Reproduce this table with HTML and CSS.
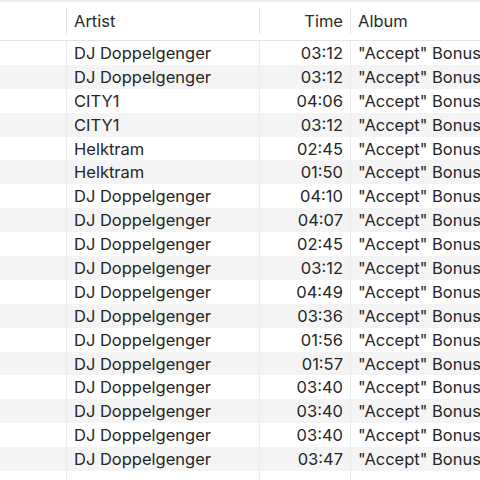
FILE: index.html
```html
<!DOCTYPE html>
<html>
<head>
<meta charset="utf-8">
<link rel="stylesheet" href="styles.css">
</head>
<body>
<div class="table">
  <div class="head">
    <div class="hcell c1"></div>
    <div class="hcell c2"><span class="sep"></span>Artist</div>
    <div class="hcell c3"><span class="sep"></span>Time</div>
    <div class="hcell c4"><span class="sep"></span>Album</div>
  </div>
  <div class="body">
    <div class="row"><div class="cell c1"></div><div class="cell c2">DJ Doppelgenger</div><div class="cell c3">03:12</div><div class="cell c4">"Accept" Bonus</div></div>
    <div class="row"><div class="cell c1"></div><div class="cell c2">DJ Doppelgenger</div><div class="cell c3">03:12</div><div class="cell c4">"Accept" Bonus</div></div>
    <div class="row"><div class="cell c1"></div><div class="cell c2">CITY1</div><div class="cell c3">04:06</div><div class="cell c4">"Accept" Bonus</div></div>
    <div class="row"><div class="cell c1"></div><div class="cell c2">CITY1</div><div class="cell c3">03:12</div><div class="cell c4">"Accept" Bonus</div></div>
    <div class="row"><div class="cell c1"></div><div class="cell c2">Helktram</div><div class="cell c3">02:45</div><div class="cell c4">"Accept" Bonus</div></div>
    <div class="row"><div class="cell c1"></div><div class="cell c2">Helktram</div><div class="cell c3">01:50</div><div class="cell c4">"Accept" Bonus</div></div>
    <div class="row"><div class="cell c1"></div><div class="cell c2">DJ Doppelgenger</div><div class="cell c3">04:10</div><div class="cell c4">"Accept" Bonus</div></div>
    <div class="row"><div class="cell c1"></div><div class="cell c2">DJ Doppelgenger</div><div class="cell c3">04:07</div><div class="cell c4">"Accept" Bonus</div></div>
    <div class="row"><div class="cell c1"></div><div class="cell c2">DJ Doppelgenger</div><div class="cell c3">02:45</div><div class="cell c4">"Accept" Bonus</div></div>
    <div class="row"><div class="cell c1"></div><div class="cell c2">DJ Doppelgenger</div><div class="cell c3">03:12</div><div class="cell c4">"Accept" Bonus</div></div>
    <div class="row"><div class="cell c1"></div><div class="cell c2">DJ Doppelgenger</div><div class="cell c3">04:49</div><div class="cell c4">"Accept" Bonus</div></div>
    <div class="row"><div class="cell c1"></div><div class="cell c2">DJ Doppelgenger</div><div class="cell c3">03:36</div><div class="cell c4">"Accept" Bonus</div></div>
    <div class="row"><div class="cell c1"></div><div class="cell c2">DJ Doppelgenger</div><div class="cell c3">01:56</div><div class="cell c4">"Accept" Bonus</div></div>
    <div class="row"><div class="cell c1"></div><div class="cell c2">DJ Doppelgenger</div><div class="cell c3">01:57</div><div class="cell c4">"Accept" Bonus</div></div>
    <div class="row"><div class="cell c1"></div><div class="cell c2">DJ Doppelgenger</div><div class="cell c3">03:40</div><div class="cell c4">"Accept" Bonus</div></div>
    <div class="row"><div class="cell c1"></div><div class="cell c2">DJ Doppelgenger</div><div class="cell c3">03:40</div><div class="cell c4">"Accept" Bonus</div></div>
    <div class="row"><div class="cell c1"></div><div class="cell c2">DJ Doppelgenger</div><div class="cell c3">03:40</div><div class="cell c4">"Accept" Bonus</div></div>
    <div class="row"><div class="cell c1"></div><div class="cell c2">DJ Doppelgenger</div><div class="cell c3">03:47</div><div class="cell c4">"Accept" Bonus</div></div>
    <div class="row"><div class="cell c1"></div><div class="cell c2"></div><div class="cell c3"></div><div class="cell c4"></div></div>
  </div>
</div>
</body>
</html>
```
FILE: styles.css
```css
html, body {
  margin: 0;
  padding: 0;
  background: #ffffff;
  overflow: hidden;
}
body {
  width: 480px;
  height: 480px;
  font-family: Inter, "Liberation Sans", sans-serif;
  font-size: 16.5px;
  color: #262626;
}
.table {
  width: 480px;
  overflow: hidden;
}
.head {
  display: grid;
  grid-template-columns: 66px 193px 91px 200px;
  height: 38px;
  border-top: 2px solid #ececec;
  border-bottom: 1px solid #e4e4e4;
  background: #ffffff;
}
.hcell {
  position: relative;
  display: flex;
  align-items: center;
  padding: 0 7px 0 8px;
  white-space: nowrap;
  color: #2a2a2a;
}
.hcell .sep {
  position: absolute;
  left: 0;
  top: 6px;
  bottom: 6px;
  width: 1px;
  background: #e2e2e2;
}
.hcell.c3 {
  justify-content: flex-end;
}
.row {
  display: grid;
  grid-template-columns: 66px 193px 91px 200px;
  height: 23.9px;
}
.row:nth-child(even) {
  background: #f4f4f4;
}
.cell {
  display: flex;
  align-items: center;
  padding: 0 7px 0 7px;
  white-space: nowrap;
  overflow: hidden;
}
.cell.c2, .cell.c3, .cell.c4 {
  border-left: 1px solid #ebebeb;
}
.cell.c3 {
  justify-content: flex-end;
}
```
